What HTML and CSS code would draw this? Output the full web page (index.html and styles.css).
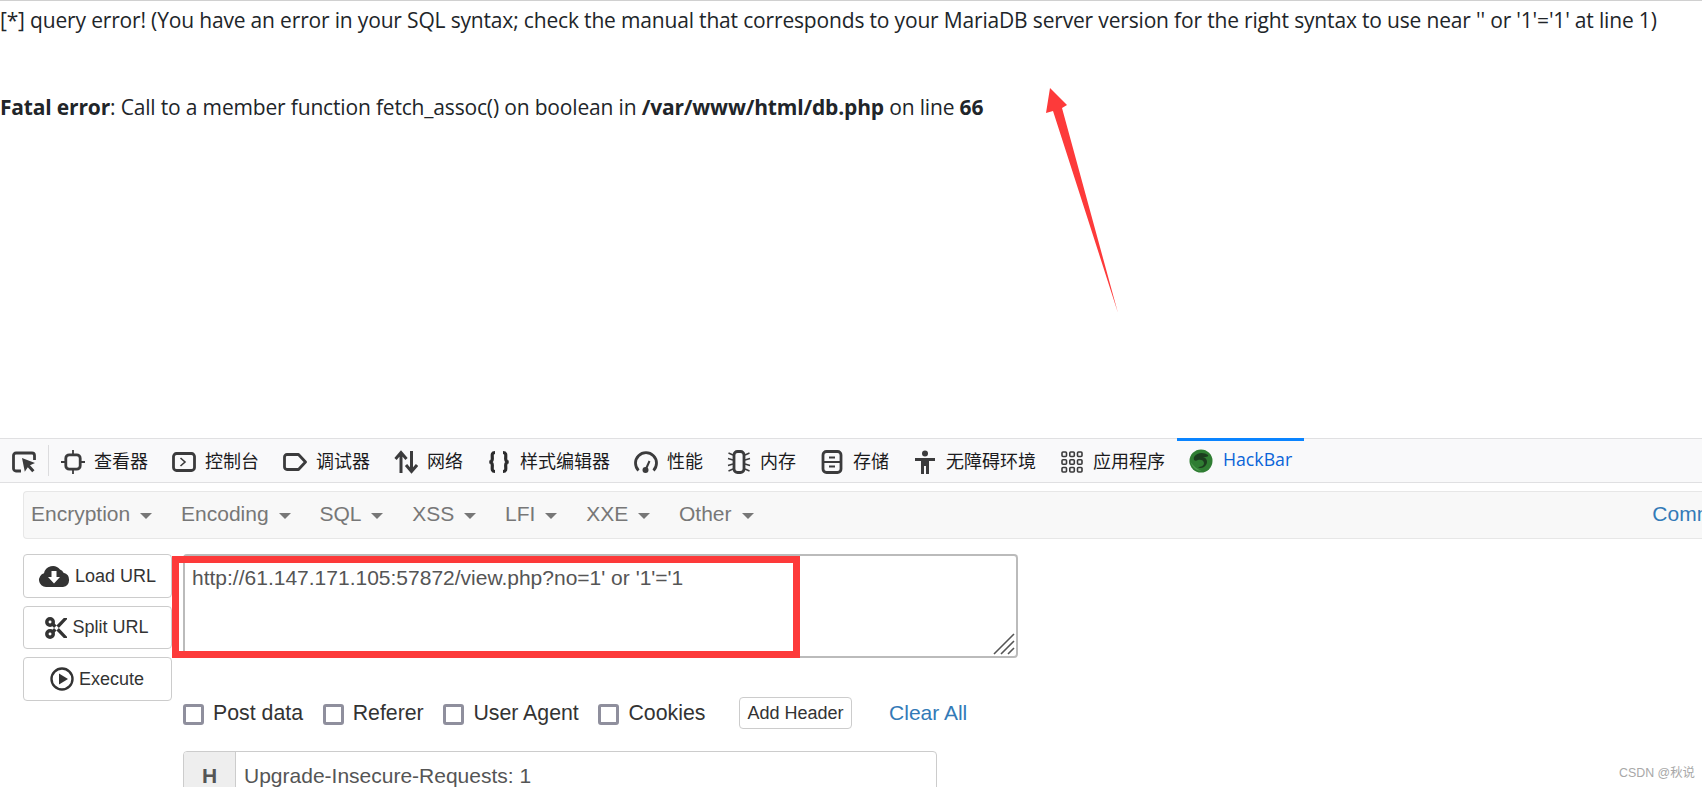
FILE: index.html
```html
<!DOCTYPE html>
<html lang="zh-CN">
<head>
<meta charset="utf-8">
<title>HackBar</title>
<link rel="stylesheet" href="styles.css">
</head>
<body>
<div class="page">
  <section class="output">
    <p class="err-query">[*] query error! (You have an error in your SQL syntax; check the manual that corresponds to your MariaDB server version for the right syntax to use near '' or '1'='1' at line 1)</p>
    <p class="err-fatal"><b>Fatal error</b>: Call to a member function fetch_assoc() on boolean in <b>/var/www/html/db.php</b> on line <b>66</b></p>
  </section>

  <nav class="devtools">
    <span class="picker">
      <svg viewBox="0 0 24 24" class="ico"><path d="M9 21H4a2.500 2.500 0 0 1-2.500-2.500V5.500A2.500 2.500 0 0 1 4 3h16a2.500 2.500 0 0 1 2.500 2.500V10" fill="none" stroke="#3b3b3c" stroke-width="2.800"/><path d="M10 8l13 5-5 2.200 4.500 5-2.300 2-4.400-5-3 4.500z" fill="#3b3b3c"/></svg>
    </span>
    <span class="tab"><svg viewBox="0 0 24 24" class="ico"><rect x="4.800" y="4.800" width="14.400" height="14.400" rx="3.500" fill="none" stroke="#3b3b3c" stroke-width="2.800"/><path d="M12 0v4M12 20v4M0 12h4M20 12h4" stroke="#3b3b3c" stroke-width="1.800"/></svg>查看器</span>
    <span class="tab"><svg viewBox="0 0 24 24" class="ico"><rect x="1.500" y="3.500" width="21" height="17" rx="3" fill="none" stroke="#3b3b3c" stroke-width="2.800"/><path d="M8.500 8l4.500 4-4.500 4" fill="none" stroke="#3b3b3c" stroke-width="1.600"/></svg>控制台</span>
    <span class="tab"><svg viewBox="0 0 24 24" class="ico"><path d="M4 4.500h11.500l7 7.500-7 7.500H4A2.500 2.500 0 0 1 1.500 17V7A2.500 2.500 0 0 1 4 4.500z" fill="none" stroke="#3b3b3c" stroke-width="2.800" stroke-linejoin="round"/></svg>调试器</span>
    <span class="tab"><svg viewBox="0 0 24 24" class="ico"><path d="M7 23V3M1.500 9L7 2.500 12.500 9M17.500 1v20M12 15l5.500 6.500L23 15" fill="none" stroke="#3b3b3c" stroke-width="3"/></svg>网络</span>
    <span class="tab"><svg viewBox="0 0 24 24" class="ico"><path d="M8 2.500C4 2.500 5.500 6 5.300 9c-.1 2-1.300 3-3 3 1.700 0 2.900 1 3 3 .2 3-1.300 6.500 2.700 6.500M16 2.500c4 0 2.500 3.500 2.700 6.500.1 2 1.300 3 3 3-1.700 0-2.900 1-3 3-.2 3 1.300 6.500-2.700 6.500" fill="none" stroke="#2b2b2c" stroke-width="3.200"/></svg>样式编辑器</span>
    <span class="tab"><svg viewBox="0 0 24 24" class="ico"><path d="M4.500 20.500A10.500 10.500 0 1 1 19.500 20.500" fill="none" stroke="#3b3b3c" stroke-width="2.800"/><circle cx="11.500" cy="20" r="3" fill="#3b3b3c"/><path d="M11.500 20L15.500 11" stroke="#3b3b3c" stroke-width="2"/></svg>性能</span>
    <span class="tab"><svg viewBox="0 0 24 24" class="ico"><rect x="7" y="1.500" width="10" height="21" rx="3.500" fill="none" stroke="#3b3b3c" stroke-width="2.800"/><path d="M6 5L1.500 3M6 10L1 8.500M6 14l-5 1.500M6 19l-4.500 2M18 5l4.500-2M18 10l5-1.500M18 14l5 1.500M18 19l4.500 2" stroke="#3b3b3c" stroke-width="1.500"/></svg>内存</span>
    <span class="tab"><svg viewBox="0 0 24 24" class="ico"><rect x="3" y="1.500" width="18" height="21" rx="3.500" fill="none" stroke="#3b3b3c" stroke-width="2.800"/><path d="M3 12h18" stroke="#3b3b3c" stroke-width="2"/><path d="M9 7.500h6M9 16.500h6" stroke="#3b3b3c" stroke-width="1.800"/></svg>存储</span>
    <span class="tab"><svg viewBox="0 0 24 24" class="ico"><circle cx="12" cy="3.500" r="3" fill="#3b3b3c"/><path d="M2 8h20v3h-6v13h-3v-8h-2v8H8V11H2z" fill="#3b3b3c"/></svg>无障碍环境</span>
    <span class="tab"><svg viewBox="0 0 24 24" class="ico"><g fill="none" stroke="#3b3b3c" stroke-width="1.600"><rect x="2" y="2" width="4.500" height="4.500" rx="1"/><rect x="9.800" y="2" width="4.500" height="4.500" rx="1"/><rect x="17.500" y="2" width="4.500" height="4.500" rx="1"/><rect x="2" y="9.800" width="4.500" height="4.500" rx="1"/><rect x="9.800" y="9.800" width="4.500" height="4.500" rx="1"/><rect x="17.500" y="9.800" width="4.500" height="4.500" rx="1"/><rect x="2" y="17.500" width="4.500" height="4.500" rx="1"/><rect x="9.800" y="17.500" width="4.500" height="4.500" rx="1"/><rect x="17.500" y="17.500" width="4.500" height="4.500" rx="1"/></g></svg>应用程序</span>
    <span class="tab tab-active"><svg viewBox="0 0 24 24" class="ico"><circle cx="12" cy="12" r="11.500" fill="#2f7d32"/><path d="M5 8c3-5 10-5 14-2 1 2-3 2-5 2 4 1 5 5 3 8-2 3-6 4-8 2 3 0 6-1 6-4s-4-4-6-3C6 13 4 11 5 8z" fill="#1c3d1f"/><path d="M1.500 13c2 6 6 9 11 9-5-2-8-5-11-9z" fill="#4d9a4f"/></svg>HackBar</span>
  </nav>

  <div class="hackbar">
    <div class="menu">
      <span class="menu-item">Encryption<i class="caret"></i></span>
      <span class="menu-item">Encoding<i class="caret"></i></span>
      <span class="menu-item">SQL<i class="caret"></i></span>
      <span class="menu-item">XSS<i class="caret"></i></span>
      <span class="menu-item">LFI<i class="caret"></i></span>
      <span class="menu-item">XXE<i class="caret"></i></span>
      <span class="menu-item">Other<i class="caret"></i></span>
      <span class="menu-link">Commit</span>
    </div>

    <div class="workspace">
      <div class="actions">
        <button class="btn" type="button"><svg viewBox="0 0 32 24" class="btn-ico cloud"><path d="M8 23a7 7 0 0 1-2-13.700A9 9 0 0 1 22 5.500a5 5 0 0 1 3.500 3.200A7.300 7.300 0 0 1 25 23z" fill="#333"/><path d="M13.500 7h5v6H22l-6 6.500L10 13h3.500z" fill="#fff"/></svg>Load URL</button>
        <button class="btn" type="button"><svg viewBox="0 0 24 24" class="btn-ico scissors"><g fill="none" stroke="#333" stroke-width="3.800"><circle cx="5.500" cy="5.500" r="3.500"/><circle cx="5.500" cy="18.500" r="3.500"/></g><path d="M7 9L20.500 23h3.500v-1.500L10 6.500zM7 15L20.500 1h3.500v1.500L10 17.500z" fill="#333"/></svg>Split URL</button>
        <button class="btn" type="button"><svg viewBox="0 0 24 24" class="btn-ico play"><circle cx="12" cy="12" r="10.500" fill="none" stroke="#333" stroke-width="2.400"/><path d="M9 6.500l9 5.500-9 5.500z" fill="#333"/></svg>Execute</button>
      </div>

      <div class="form">
        <div class="url-box">
          http://61.147.171.105:57872/view.php?no=1' or '1'='1
          <svg viewBox="0 0 22 22" class="grip"><path d="M1 21L21 1M8 21L21 8M15 21l6-6" stroke="#555" stroke-width="1.600" fill="none"/></svg>
        </div>

        <div class="options">
          <label class="check"><input type="checkbox">Post data</label>
          <label class="check"><input type="checkbox">Referer</label>
          <label class="check"><input type="checkbox">User Agent</label>
          <label class="check"><input type="checkbox">Cookies</label>
          <button class="btn-small" type="button">Add Header</button>
          <span class="clear">Clear All</span>
        </div>

        <div class="header-row">
          <span class="header-tag">H</span>
          <span class="header-val">Upgrade-Insecure-Requests: 1</span>
        </div>
      </div>

      <div class="highlight"></div>
    </div>
  </div>

  <svg class="arrow" viewBox="0 0 80 235"><path d="M10 3L6 28 13 26 78 228 22 23 27 20z" fill="#fd3a3a"/></svg>
  <span class="watermark">CSDN @秋说</span>
</div>
</body>
</html>
```

FILE: styles.css
```css
* { box-sizing: border-box; }

html, body {
  margin: 0;
  height: 787px;
  overflow: hidden;
  background: #fff;
}

.page {
  position: relative;
  width: 1702px;
  height: 787px;
  overflow: hidden;
  display: flex;
  flex-direction: column;
  font-family: "Liberation Sans", Arial, sans-serif;
}

.output {
  height: 438px;
  flex: none;
  border-top: 1px solid #d0d0d0;
  font-family: "Open Sans", sans-serif;
  font-size: 21px;
  color: #212529;
  letter-spacing: -0.17px;
}

.output p {
  margin: 0;
  white-space: nowrap;
  line-height: 28px;
}

.err-query { padding-top: 5px; }
.err-fatal { padding-top: 59px; }

.devtools {
  height: 45px;
  flex: none;
  display: flex;
  align-items: center;
  background: #f9f9fa;
  border-top: 1px solid #e0e0e2;
  border-bottom: 1px solid #e0e0e2;
  font-family: "Noto Sans CJK SC", sans-serif;
  font-size: 18px;
  color: #1b1b1d;
}

.ico {
  width: 24px;
  height: 24px;
  flex: none;
}

.picker {
  width: 49px;
  height: 31px;
  padding: 2px 0 0 12px;
  display: flex;
  align-items: center;
  border-right: 1px solid #dcdcde;
}

.tab {
  height: 100%;
  padding: 0 12px 2px;
  display: flex;
  align-items: center;
  gap: 9px;
  white-space: nowrap;
}

.tab .ico { margin-top: 4px; }

.tab-active {
  gap: 10px;
  color: #0a64d8;
  font-family: "Open Sans", sans-serif;
  font-size: 17.7px;
  box-shadow: inset 0 3px 0 #0a84ff;
  margin-top: -1px;
  height: 44px;
  align-self: flex-start;
}

.hackbar {
  flex: 1;
  padding: 8px 0 0 23px;
  font-size: 21px;
  color: #555;
}

.menu {
  height: 48px;
  display: flex;
  align-items: center;
  padding: 0 0 2px 7px;
  background: #f8f8f8;
  border: 1px solid #e7e7e7;
  border-right: 0;
  border-radius: 4px 0 0 4px;
  color: #777;
  overflow: hidden;
  white-space: nowrap;
}

.menu-item {
  display: flex;
  align-items: center;
  gap: 10px;
  margin-right: 28.8px;
}

.caret {
  width: 0;
  height: 0;
  margin-top: 3px;
  border-top: 6px solid #777;
  border-left: 6px solid transparent;
  border-right: 6px solid transparent;
}

.menu-link {
  margin-left: 870px;
  color: #337ab7;
}

.workspace {
  position: relative;
  display: flex;
  gap: 11px;
  margin-top: 15px;
}

.actions {
  width: 149px;
  flex: none;
  display: flex;
  flex-direction: column;
  gap: 8px;
}

.btn {
  height: 43.5px;
  padding: 1px 1px 0 0;
  display: flex;
  align-items: center;
  justify-content: center;
  gap: 5px;
  background: #fff;
  border: 1px solid #ccc;
  border-radius: 4px;
  font: 18px "Liberation Sans", Arial, sans-serif;
  color: #333;
}

.btn-ico { flex: none; height: 24px; }
.cloud { width: 32px; }
.scissors { width: 22px; }
.play { width: 24px; }

.form {
  width: 835px;
  flex: none;
}

.url-box {
  position: relative;
  height: 104px;
  padding: 8px 7px;
  background: #fff;
  border: 2px solid #bbb;
  border-radius: 4px;
  font-size: 21px;
  line-height: 27px;
  color: #555;
  white-space: nowrap;
}

.grip {
  position: absolute;
  right: 1px;
  bottom: 1px;
  width: 22px;
  height: 22px;
}

.options {
  height: 32px;
  margin-top: 39px;
  display: flex;
  align-items: center;
  color: #333;
}

.check {
  display: flex;
  align-items: center;
  gap: 9px;
  margin-right: 19.7px;
  font-size: 21.3px;
}

.check input {
  appearance: none;
  width: 21px;
  height: 21px;
  margin: 2px 0 0;
  background: #fff;
  border: 3px solid #8f8f9d;
  border-radius: 3px;
}

.btn-small {
  width: 113px;
  height: 32px;
  margin-left: 14px;
  padding: 0;
  background: #fff;
  border: 1px solid #ccc;
  border-radius: 4px;
  font: 18px "Liberation Sans", Arial, sans-serif;
  color: #333;
}

.clear {
  margin-left: 37px;
  color: #337ab7;
}

.header-row {
  width: 754px;
  height: 50px;
  margin-top: 22px;
  display: flex;
  align-items: center;
  border: 1px solid #ccc;
  border-radius: 4px;
  overflow: hidden;
}

.header-tag {
  width: 52px;
  height: 100%;
  flex: none;
  display: flex;
  align-items: center;
  justify-content: center;
  background: #eee;
  border-right: 1px solid #ccc;
  font-weight: 700;
}

.header-val {
  padding-left: 8px;
}

.highlight {
  position: absolute;
  left: 149px;
  top: 2px;
  width: 628px;
  height: 102px;
  border: 7px solid #fd3a3a;
}

.arrow {
  position: absolute;
  left: 1040px;
  top: 85px;
  width: 80px;
  height: 235px;
}

.watermark {
  position: absolute;
  left: 1619px;
  top: 763px;
  font-family: "Liberation Sans", "Noto Sans CJK SC", sans-serif;
  font-size: 12.4px;
  color: #a8a8a8;
}
```
